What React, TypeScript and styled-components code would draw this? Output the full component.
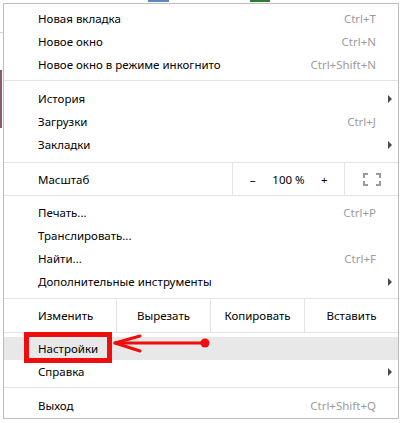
import React from "react";
import styled, { createGlobalStyle } from "styled-components";

const Global = createGlobalStyle`
  html, body { margin: 0; padding: 0; background: #fff; }
  body { width: 401px; height: 423px; overflow: hidden; font-family: "Noto Sans", "Segoe UI", Arial, sans-serif; }
`;

const Page = styled.div`
  position: relative;
  width: 401px;
  height: 423px;
  padding: 3px 2px 0 3px;
  box-sizing: border-box;
  background:
    linear-gradient(#5f86c4, #5f86c4) 148px 0 / 21px 2px no-repeat,
    linear-gradient(#2e7d32, #2e7d32) 250px 0 / 20px 2px no-repeat,
    linear-gradient(#8a5a6e, #8a5a6e) 0 70px / 2px 58px no-repeat,
    linear-gradient(#d0d0d0, #d0d0d0) 0 32px / 3px 1px no-repeat,
    #fff;
`;

const Menu = styled.div`
  width: 396px;
  height: 416px;
  box-sizing: border-box;
  border: 1px solid #bdbdbd;
  background: #fff;
  display: flex;
  flex-direction: column;
  padding: 3px 0 0;
  font-size: 11.5px;
  color: #000;
`;

const Item = styled.div<{ $hl?: boolean }>`
  height: 23px;
  flex: none;
  display: flex;
  align-items: center;
  padding: 0 22px 0 34px;
  background: ${(p) => (p.$hl ? "#e8e8e8" : "transparent")};
  position: relative;
`;

const Label = styled.span`
  flex: 1;
  white-space: nowrap;
`;

const Shortcut = styled.span`
  color: #9b9b9b;
  white-space: nowrap;
`;

const SubArrow = styled.span`
  position: absolute;
  right: 6px;
  top: 8px;
  width: 0;
  height: 0;
  border-top: 4px solid transparent;
  border-bottom: 4px solid transparent;
  border-left: 4px solid #4a4a4a;
`;

const Separator = styled.div<{ $above: number; $below: number }>`
  height: 1px;
  flex: none;
  background: #e3e3e3;
  margin: ${(p) => `${p.$above}px 0 ${p.$below}px`};
`;

const Spacer = styled.div<{ $h: number }>`
  flex: none;
  height: ${(p) => p.$h}px;
`;

const ZoomRow = styled.div`
  height: 32px;
  flex: none;
  display: flex;
  align-items: stretch;
  border-bottom: 1px solid #e3e3e3;
`;

const ZoomLabel = styled.div`
  flex: 1;
  display: flex;
  align-items: center;
  padding-left: 34px;
`;

const ZoomControls = styled.div`
  width: 111px;
  display: flex;
  align-items: center;
  border-left: 1px solid #e3e3e3;
`;

const ZoomBtn = styled.span`
  width: 40px;
  text-align: center;
`;

const ZoomValue = styled.span`
  flex: 1;
  text-align: center;
  white-space: nowrap;
`;

const FullCell = styled.div`
  width: 53px;
  display: flex;
  align-items: center;
  justify-content: center;
  border-left: 1px solid #e3e3e3;
`;

const EditRow = styled.div`
  height: 33px;
  flex: none;
  display: grid;
  grid-template-columns: 112px repeat(3, 1fr);
  border-bottom: 1px solid #e3e3e3;
  margin-bottom: 4px;
`;

const EditLabel = styled.div`
  display: flex;
  align-items: center;
  padding-left: 34px;
`;

const EditBtn = styled.div`
  display: flex;
  align-items: center;
  justify-content: center;
  border-left: 1px solid #e3e3e3;
`;

const Box = styled.div`
  position: absolute;
  left: 24px;
  top: 332px;
  width: 88px;
  height: 31px;
  box-sizing: border-box;
  border: 5px solid #ee0e0e;
`;

const ArrowSvg = styled.svg`
  position: absolute;
  left: 110px;
  top: 330px;
`;

const FullIcon = () => (
  <svg width="18" height="13" viewBox="0 0 18 13">
    <g fill="none" stroke="#9a9a9a" strokeWidth="2">
      <path d="M1 5V1H5" />
      <path d="M13 1H17V5" />
      <path d="M17 8V12H13" />
      <path d="M5 12H1V8" />
    </g>
  </svg>
);

export default function App() {
  return (
    <>
      <Global />
      <Page>
        <Menu>
          <Item><Label>Новая вкладка</Label><Shortcut>Ctrl+T</Shortcut></Item>
          <Item><Label>Новое окно</Label><Shortcut>Ctrl+N</Shortcut></Item>
          <Item><Label>Новое окно в режиме инкогнито</Label><Shortcut>Ctrl+Shift+N</Shortcut></Item>
          <Separator $above={4} $below={6} />
          <Item><Label>История</Label><SubArrow /></Item>
          <Item><Label>Загрузки</Label><Shortcut>Ctrl+J</Shortcut></Item>
          <Item><Label>Закладки</Label><SubArrow /></Item>
          <Separator $above={6} $below={0} />
          <ZoomRow>
            <ZoomLabel>Масштаб</ZoomLabel>
            <ZoomControls>
              <ZoomBtn>–</ZoomBtn>
              <ZoomValue>100 %</ZoomValue>
              <ZoomBtn>+</ZoomBtn>
            </ZoomControls>
            <FullCell><FullIcon /></FullCell>
          </ZoomRow>
          <Spacer $h={5} />
          <Item><Label>Печать...</Label><Shortcut>Ctrl+P</Shortcut></Item>
          <Item><Label>Транслировать...</Label></Item>
          <Item><Label>Найти...</Label><Shortcut>Ctrl+F</Shortcut></Item>
          <Item><Label>Дополнительные инструменты</Label><SubArrow /></Item>
          <Separator $above={5} $below={0} />
          <EditRow>
            <EditLabel>Изменить</EditLabel>
            <EditBtn>Вырезать</EditBtn>
            <EditBtn>Копировать</EditBtn>
            <EditBtn>Вставить</EditBtn>
          </EditRow>
          <Item $hl><Label>Настройки</Label></Item>
          <Item><Label>Справка</Label><SubArrow /></Item>
          <Separator $above={4} $below={6} />
          <Item><Label>Выход</Label><Shortcut>Ctrl+Shift+Q</Shortcut></Item>
        </Menu>
        <Box />
        <ArrowSvg width="104" height="26" viewBox="0 0 104 26">
          <g stroke="#ee0e0e" strokeWidth="3" strokeLinecap="round" fill="none">
            <path d="M6 13H95" />
            <path d="M5 13L30 6" />
            <path d="M5 13L30 21" />
          </g>
          <circle cx="95" cy="13" r="4.5" fill="#ee0e0e" />
        </ArrowSvg>
      </Page>
    </>
  );
}
